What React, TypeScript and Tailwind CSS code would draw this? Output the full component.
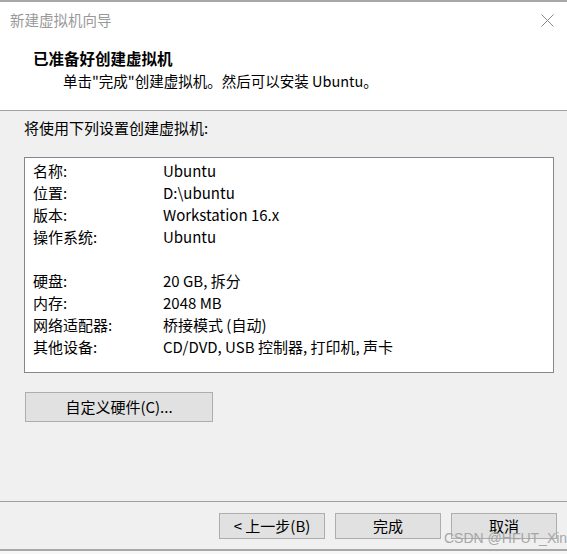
import React from "react";

const font = { fontFamily: '"Noto Sans CJK SC", "Noto Sans", sans-serif' };

const rows: [string, string][] = [
  ["名称:", "Ubuntu"],
  ["位置:", "D:\\ubuntu"],
  ["版本:", "Workstation 16.x"],
  ["操作系统:", "Ubuntu"],
  ["", ""],
  ["硬盘:", "20 GB, 拆分"],
  ["内存:", "2048 MB"],
  ["网络适配器:", "桥接模式 (自动)"],
  ["其他设备:", "CD/DVD, USB 控制器, 打印机, 声卡"],
];

export default function App() {
  return (
    <div
      className="relative w-[567px] h-[554px] bg-[#f0f0f0] flex flex-col text-[15px] text-black overflow-hidden"
      style={font}
    >
      <div className="h-[2px] bg-[#a8a8a8]" />
      <div className="bg-white h-[108px] flex flex-col">
        <div className="h-[36px] flex items-center justify-between pl-[10px] pr-[13px]">
          <span className="text-[14.5px] text-[#999999] leading-[20px]">新建虚拟机向导</span>
          <svg width="13" height="13" viewBox="0 0 13 13">
            <path d="M0.5 0.5 L12.5 12.5 M12.5 0.5 L0.5 12.5" stroke="#8a8a8a" strokeWidth="1" />
          </svg>
        </div>
        <div className="pl-[33px] pt-[10px] font-bold text-[15.5px] leading-[20px]">已准备好创建虚拟机</div>
        <div className="pl-[63px] pt-[3px] text-[14.5px] leading-[20px]">单击"完成"创建虚拟机。然后可以安装 Ubuntu。</div>
      </div>
      <div className="h-px bg-[#a0a0a0]" />
      <div className="flex-1 flex flex-col px-[24px]">
        <div className="pt-[7px] leading-[20px]">将使用下列设置创建虚拟机:</div>
        <div className="mt-[19px] w-[530px] h-[216px] bg-white border border-[#828790] pt-[2px] pl-[8px]">
          {rows.map(([k, v], i) => (
            <div key={i} className="h-[22px] flex items-center leading-[20px]">
              <span className="w-[130px]">{k}</span>
              <span>{v}</span>
            </div>
          ))}
        </div>
        <button className="mt-[19px] ml-px w-[188px] h-[30px] bg-[#e1e1e1] border border-[#adadad] flex items-center justify-center">
          自定义硬件(C)...
        </button>
      </div>
      <div className="h-px bg-[#a0a0a0]" />
      <div className="h-[47px] flex justify-end gap-[10px] pt-[11px] pr-[10px]">
        <button className="w-[106px] h-[26px] bg-[#e1e1e1] border border-[#adadad] flex items-center justify-center">
          &lt; 上一步(B)
        </button>
        <button className="w-[106px] h-[26px] bg-[#e1e1e1] border border-[#adadad] flex items-center justify-center">
          完成
        </button>
        <button className="w-[106px] h-[26px] bg-[#e1e1e1] border border-[#adadad] flex items-center justify-center">
          取消
        </button>
      </div>
      <div className="h-[2px] bg-[#a8a8a8]" />
      <div className="h-[3px] bg-[#f7f7f7]" />
      <div
        className="absolute left-[444px] top-[529px] whitespace-nowrap text-[14px] leading-[18px] text-[#a0a0a0] opacity-90"
        style={{ fontFamily: '"Liberation Sans", Arial, sans-serif' }}
      >
        CSDN @HFUT_Xin
      </div>
    </div>
  );
}
